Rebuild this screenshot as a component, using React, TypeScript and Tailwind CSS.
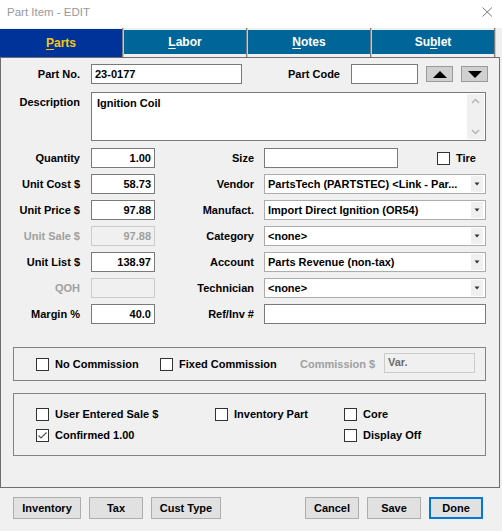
import React from "react";

const font = "font-['Liberation_Sans',Arial,sans-serif]";

function Box({ checked = false }: { checked?: boolean }) {
  return (
    <div className="flex h-[13px] w-[13px] shrink-0 items-center justify-center border border-[#333] bg-white">
      {checked && (
        <svg width="11" height="11" viewBox="0 0 11 11" fill="none">
          <path d="M1.5 5.5 L4 8 L9.5 2.5" stroke="#555" strokeWidth="1.2" />
        </svg>
      )}
    </div>
  );
}

function Check({ label, checked = false, className = "" }: { label: string; checked?: boolean; className?: string }) {
  return (
    <div className={`flex h-[13px] items-center ${className}`}>
      <Box checked={checked} />
      <span className="ml-[6px] leading-[13px]">{label}</span>
    </div>
  );
}

function TextBox({
  value = "",
  w,
  right = false,
  disabled = false,
}: {
  value?: string;
  w: string;
  right?: boolean;
  disabled?: boolean;
}) {
  return (
    <div
      className={`flex h-[20px] shrink-0 items-center border px-[3px] ${w} ${right ? "justify-end" : ""} ${
        disabled ? "border-[#cccccc] bg-[#f0f0f0] text-[#a0a0a0]" : "border-[#7a7a7a] bg-white text-black"
      }`}
    >
      {value}
    </div>
  );
}

function Select({ value }: { value: string }) {
  return (
    <div className="flex h-[20px] w-[222px] items-center border border-[#acacac] bg-white pl-[3px] pr-[2px]">
      <span className="flex-1 truncate whitespace-nowrap">{value}</span>
      <div className="flex h-[16px] w-[12px] items-center justify-center bg-[#f0f0f0]">
        <svg width="6" height="4" viewBox="0 0 6 4">
          <path d="M0.5 0.5 L5.5 0.5 L3 3.5 Z" fill="#333" />
        </svg>
      </div>
    </div>
  );
}

function ArrowBtn({ up }: { up?: boolean }) {
  return (
    <div className="flex h-[16px] w-[27px] items-center justify-center border border-[#9a9a9a] bg-[#d0d0d0]">
      <svg width="14" height="7" viewBox="0 0 14 7">
        {up ? <path d="M0 7 L7 0 L14 7 Z" fill="#000" /> : <path d="M0 0 L14 0 L7 7 Z" fill="#000" />}
      </svg>
    </div>
  );
}

function Tab({ label, active = false }: { label: [string, string, string]; active?: boolean }) {
  return (
    <div className="flex h-full w-[124px]">
      <div
        className={`flex w-[122px] items-center justify-center text-[12px] font-bold ${
          active ? "mt-[1px] h-[28px] bg-[#003399] text-[#f5c518]" : "mt-[2px] h-[24px] bg-[#006699] text-white"
        }`}
      >
        {label[0]}
        <span className="underline underline-offset-2">{label[1]}</span>
        {label[2]}
      </div>
      <div className="h-full w-[1px] bg-[#7d7d7d]" />
      <div className="h-full w-[1px] bg-[#c8c8c8]" />
    </div>
  );
}

function Btn({ label, w, primary = false }: { label: string; w: string; primary?: boolean }) {
  return (
    <div
      className={`flex h-[22px] items-center justify-center bg-[#e1e1e1] ${w} ${
        primary ? "border-2 border-[#0078d7]" : "border border-[#adadad]"
      }`}
    >
      {label}
    </div>
  );
}

const left = [
  { label: "Quantity", value: "1.00" },
  { label: "Unit Cost $", value: "58.73" },
  { label: "Unit Price $", value: "97.88" },
  { label: "Unit Sale $", value: "97.88", disabled: true },
  { label: "Unit List $", value: "138.97" },
  { label: "QOH", value: "", disabled: true },
  { label: "Margin %", value: "40.0" },
];

const right: { label: string; kind: "size" | "select" | "input"; value?: string }[] = [
  { label: "Size", kind: "size" },
  { label: "Vendor", kind: "select", value: "PartsTech (PARTSTEC) <Link - Par..." },
  { label: "Manufact.", kind: "select", value: "Import Direct Ignition (OR54)" },
  { label: "Category", kind: "select", value: "<none>" },
  { label: "Account", kind: "select", value: "Parts Revenue (non-tax)" },
  { label: "Technician", kind: "select", value: "<none>" },
  { label: "Ref/Inv #", kind: "input" },
];

export default function App() {
  return (
    <div className={`flex h-[531px] w-[502px] flex-col overflow-hidden bg-[#f0f0f0] text-[11px] font-bold text-black ${font}`}>
      {/* Title bar */}
      <div className="flex h-[28px] shrink-0 items-start bg-white pt-[5px]">
        <span className="ml-[7px] text-[11.5px] font-normal leading-[14px] text-[#999999]">Part Item - EDIT</span>
        <svg className="ml-auto mr-[9px] mt-[2px]" width="11" height="10" viewBox="0 0 11 10">
          <path d="M0.5 0.5 L10 9.5 M10 0.5 L0.5 9.5" stroke="#777" strokeWidth="1" />
        </svg>
      </div>

      {/* Tabs */}
      <div className="flex h-[29px] shrink-0">
        <Tab label={["", "P", "arts"]} active />
        <Tab label={["", "L", "abor"]} />
        <Tab label={["", "N", "otes"]} />
        <Tab label={["Su", "b", "let"]} />
      </div>

      {/* Panel */}
      <div className="flex h-[431px] w-[500px] shrink-0 flex-col border border-[#6e6e6e]">
        <div className="mt-[6px] flex items-center">
          <span className="w-[79px] text-right">Part No.</span>
          <div className="ml-[11px]">
            <TextBox value="23-0177" w="w-[151px]" />
          </div>
          <span className="w-[98px] text-right">Part Code</span>
          <div className="ml-[11px]">
            <TextBox w="w-[67px]" />
          </div>
          <div className="ml-[8px]">
            <ArrowBtn up />
          </div>
          <div className="ml-[8px]">
            <ArrowBtn />
          </div>
        </div>

        <div className="mt-[8px] flex items-start">
          <span className="w-[79px] pt-[2px] text-right">Description</span>
          <div className="relative ml-[11px] h-[49px] w-[395px] border border-[#7a7a7a] bg-white pl-[5px] pt-[2px]">
            Ignition Coil
            <div className="absolute right-[1px] top-[1px] flex h-[45px] w-[17px] flex-col items-center justify-between bg-[#f0f0f0] py-[4px]">
              <svg width="9" height="6" viewBox="0 0 9 6">
                <path d="M1 5 L4.5 1.5 L8 5" stroke="#b4b4b4" strokeWidth="1.5" fill="none" />
              </svg>
              <svg width="9" height="6" viewBox="0 0 9 6">
                <path d="M1 1 L4.5 4.5 L8 1" stroke="#b4b4b4" strokeWidth="1.5" fill="none" />
              </svg>
            </div>
          </div>
        </div>

        <div className="mt-[7px] flex flex-col gap-[6px]">
          {left.map((l, i) => {
            const r = right[i];
            return (
              <div key={l.label} className="flex h-[20px] items-center">
                <span className={`w-[79px] text-right ${l.disabled ? "text-[#a0a0a0]" : ""}`}>{l.label}</span>
                <div className="ml-[11px]">
                  <TextBox value={l.value} w="w-[64px]" right disabled={l.disabled} />
                </div>
                <span className="w-[99px] text-right">{r.label}</span>
                <div className="ml-[10px] flex items-center">
                  {r.kind === "size" && (
                    <>
                      <TextBox w="w-[134px]" />
                      <Check label="Tire" className="ml-[39px]" />
                    </>
                  )}
                  {r.kind === "select" && <Select value={r.value ?? ""} />}
                  {r.kind === "input" && <TextBox w="w-[222px]" />}
                </div>
              </div>
            );
          })}
        </div>

        {/* Commission group */}
        <div className="ml-[12px] mt-[23px] flex h-[34px] w-[473px] items-center border border-[#838383] pl-[22px]">
          <Check label="No Commission" className="w-[124px]" />
          <Check label="Fixed Commission" className="w-[140px]" />
          <span className="w-[84px] text-[#a0a0a0]">Commission $</span>
          <div className="mb-[3px]">
            <div className="flex h-[20px] w-[91px] items-center border border-[#cccccc] bg-[#f0f0f0] px-[3px] text-[#6d6d6d]">
              Var.
            </div>
          </div>
        </div>

        {/* Options group */}
        <div className="ml-[12px] mt-[12px] flex h-[63px] w-[473px] flex-col gap-[8px] border border-[#838383] pl-[22px] pt-[14px]">
          <div className="flex h-[13px] items-center">
            <Check label="User Entered Sale $" className="w-[179px]" />
            <Check label="Inventory Part" className="w-[129px]" />
            <Check label="Core" />
          </div>
          <div className="flex h-[13px] items-center">
            <Check label="Confirmed 1.00" checked className="w-[308px]" />
            <Check label="Display Off" />
          </div>
        </div>
      </div>

      {/* Footer */}
      <div className="mt-[9px] flex items-center pl-[13px] pr-[19px]">
        <div className="flex gap-[8px]">
          <Btn label="Inventory" w="w-[68px]" />
          <Btn label="Tax" w="w-[54px]" />
          <Btn label="Cust Type" w="w-[70px]" />
        </div>
        <div className="ml-auto flex gap-[8px]">
          <Btn label="Cancel" w="w-[54px]" />
          <Btn label="Save" w="w-[54px]" />
          <Btn label="Done" w="w-[54px]" primary />
        </div>
      </div>
    </div>
  );
}
